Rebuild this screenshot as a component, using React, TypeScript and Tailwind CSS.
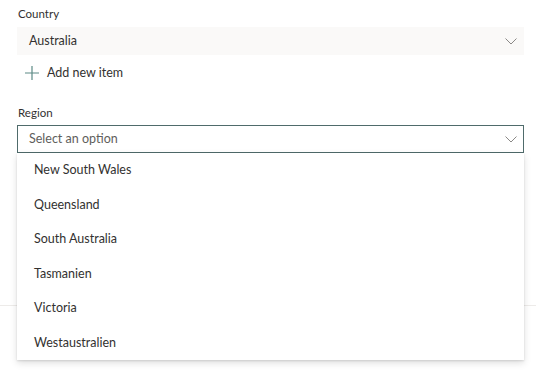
import React from "react";

const Chevron = () => (
  <svg width="12" height="7" viewBox="0 0 12 7" fill="none">
    <path d="M0.5 0.5 L6 6 L11.5 0.5" stroke="#8a8886" strokeWidth="1" />
  </svg>
);

const items = [
  "New South Wales",
  "Queensland",
  "South Australia",
  "Tasmanien",
  "Victoria",
  "Westaustralien",
];

export default function App() {
  return (
    <div
      className="relative w-[536px] h-[378px] bg-white overflow-hidden text-[#323130]"
      style={{ fontFamily: "Lato, 'Open Sans', sans-serif" }}
    >
      <div className="pl-[17px] pr-[12px] pt-[6px]">
        <div className="h-[16px] text-[11.5px] leading-[16px] pl-[1px]">Country</div>
        <div className="mt-[5px] h-[28px] bg-[#faf9f8] flex items-center justify-between pl-[12px] pr-[7px] text-[12.5px]">
          <span>Australia</span>
          <Chevron />
        </div>
        <div className="mt-[5px] h-[26px] flex items-center pl-[8px] text-[12.5px]">
          <svg width="14" height="14" viewBox="0 0 14 14" fill="none">
            <path d="M7 0 V14 M0 7 H14" stroke="#5c8a85" strokeWidth="1.2" />
          </svg>
          <span className="ml-[8px]">Add new item</span>
        </div>
        <div className="mt-[19px] h-[16px] text-[11.5px] leading-[16px] pl-[1px]">Region</div>
        <div className="relative mt-[4px]">
          <div className="h-[28px] border border-[#4f6b6b] flex items-center justify-between pl-[11px] pr-[6px] text-[12.5px] text-[#605e5c]">
            <span>Select an option</span>
            <Chevron />
          </div>
          <div className="absolute left-0 right-0 top-full z-10 bg-white shadow-[0_3.2px_7.2px_rgba(0,0,0,0.132),0_0.6px_1.8px_rgba(0,0,0,0.108)]">
            {items.map((it) => (
              <div key={it} className="h-[34.5px] flex items-center pl-[17px] text-[12.5px] text-[#323130]">
                <span className="mt-[1px]">{it}</span>
              </div>
            ))}
          </div>
        </div>
      </div>
      <div className="mt-[152px] border-t border-[#edebe9]" />
    </div>
  );
}
